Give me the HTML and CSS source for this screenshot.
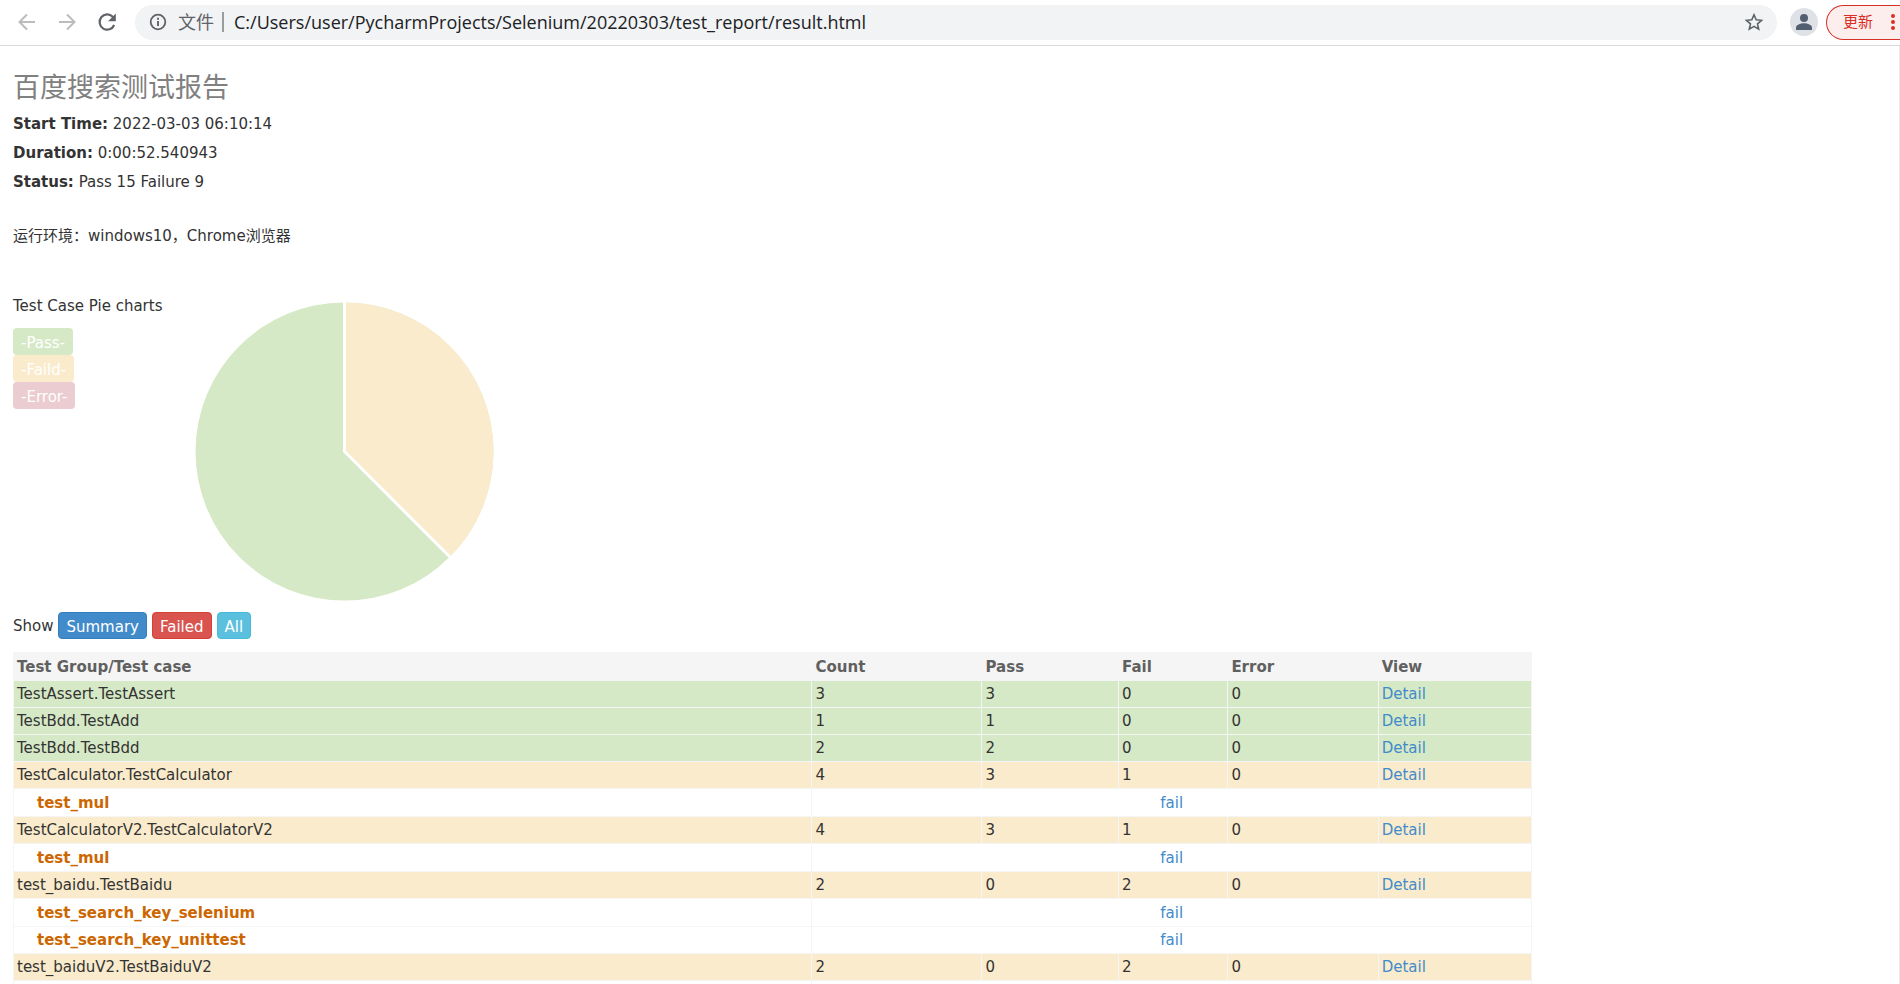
FILE: index.html
```html
<!DOCTYPE html>
<html lang="zh-CN">
<head>
<meta charset="utf-8">
<title>百度搜索测试报告</title>
<link rel="stylesheet" href="styles.css">
</head>
<body>
<header class="toolbar">
  <button class="icon-btn muted" type="button" aria-label="Back">
    <svg width="24" height="24" viewBox="0 0 24 24"><path d="M20 12H5M12 4.500L4.500 12l7.500 7.500" fill="none" stroke="currentColor" stroke-width="2"/></svg>
  </button>
  <button class="icon-btn muted" type="button" aria-label="Forward">
    <svg width="24" height="24" viewBox="0 0 24 24"><path d="M4 12h15M12 4.500l7.500 7.500-7.500 7.500" fill="none" stroke="currentColor" stroke-width="2"/></svg>
  </button>
  <button class="icon-btn" type="button" aria-label="Reload">
    <svg width="24" height="24" viewBox="0 0 24 24"><path d="M19.200 15a7.600 7.600 0 1 1-1.500-8.200l2 2" fill="none" stroke="currentColor" stroke-width="2.200"/><path d="M20.800 3.500v7.700h-7.700z" fill="currentColor"/></svg>
  </button>
  <div class="address">
    <svg class="info" width="18" height="18" viewBox="0 0 18 18"><circle cx="9" cy="9" r="7.300" fill="none" stroke="currentColor" stroke-width="1.800"/><path d="M9 8v5M9 4.800v1.900" stroke="currentColor" stroke-width="1.900"/></svg>
    <span class="scheme">文件</span>
    <span class="divider"></span>
    <span class="url">C:/Users/user/PycharmProjects/Selenium/20220303/test_report/result.html</span>
    <button class="star" type="button" aria-label="Bookmark">
      <svg width="18" height="18" viewBox="0 0 18 18"><path d="M9 1.800l2.200 5 5.400.5-4.100 3.600 1.200 5.300L9 13.400l-4.700 2.800 1.200-5.300L1.400 7.300l5.400-.5z" fill="none" stroke="currentColor" stroke-width="1.600"/></svg>
    </button>
  </div>
  <button class="avatar" type="button" aria-label="Profile">
    <svg width="28" height="28" viewBox="0 0 28 28"><circle cx="14" cy="10" r="4" fill="currentColor"/><path d="M6 22v-2.200C6 17 10.500 15.300 14 15.300s8 1.700 8 4.500V22z" fill="currentColor"/></svg>
  </button>
  <button class="update" type="button">更新
    <svg width="4" height="18" viewBox="0 0 4 18"><circle cx="2" cy="3" r="2" fill="currentColor"/><circle cx="2" cy="9" r="2" fill="currentColor"/><circle cx="2" cy="15" r="2" fill="currentColor"/></svg>
  </button>
</header>
<main class="report">
  <h1>百度搜索测试报告</h1>
  <p class="attribute"><strong>Start Time:</strong> 2022-03-03 06:10:14</p>
  <p class="attribute"><strong>Duration:</strong> 0:00:52.540943</p>
  <p class="attribute"><strong>Status:</strong> Pass 15 Failure 9</p>
  <p class="description">运行环境：windows10，Chrome浏览器</p>
  <section class="chart">
    <div class="legend">
      <p>Test Case Pie charts</p>
      <span class="badge pass">-Pass-</span>
      <span class="badge faild">-Faild-</span>
      <span class="badge error">-Error-</span>
    </div>
    <svg class="pie" width="300" height="300" viewBox="0 0 300 300" role="img" aria-label="Test case results">
      <circle cx="149.500" cy="149.500" r="149" fill="#d6e9c6"/>
      <path d="M149.500 149.500V.5A149 149 0 0 1 254.860 254.860z" fill="#faebcc"/>
      <path d="M149.500 0V149.500L257 257" fill="none" stroke="#fff" stroke-width="3"/>
    </svg>
  </section>
  <div class="filters">
    <span>Show</span>
    <button class="btn primary" type="button">Summary</button>
    <button class="btn danger" type="button">Failed</button>
    <button class="btn info-btn" type="button">All</button>
  </div>
  <table class="results">
    <colgroup><col class="c-name"><col class="c-count"><col class="c-pass"><col class="c-fail"><col class="c-error"><col class="c-view"></colgroup>
    <thead>
      <tr><th>Test Group/Test case</th><th>Count</th><th>Pass</th><th>Fail</th><th>Error</th><th>View</th></tr>
    </thead>
    <tbody>
      <tr class="ok"><td>TestAssert.TestAssert</td><td>3</td><td>3</td><td>0</td><td>0</td><td><a href="#">Detail</a></td></tr>
      <tr class="ok"><td>TestBdd.TestAdd</td><td>1</td><td>1</td><td>0</td><td>0</td><td><a href="#">Detail</a></td></tr>
      <tr class="ok"><td>TestBdd.TestBdd</td><td>2</td><td>2</td><td>0</td><td>0</td><td><a href="#">Detail</a></td></tr>
      <tr class="bad"><td>TestCalculator.TestCalculator</td><td>4</td><td>3</td><td>1</td><td>0</td><td><a href="#">Detail</a></td></tr>
      <tr class="case"><td>test_mul</td><td colspan="5"><a href="#">fail</a></td></tr>
      <tr class="bad"><td>TestCalculatorV2.TestCalculatorV2</td><td>4</td><td>3</td><td>1</td><td>0</td><td><a href="#">Detail</a></td></tr>
      <tr class="case"><td>test_mul</td><td colspan="5"><a href="#">fail</a></td></tr>
      <tr class="bad"><td>test_baidu.TestBaidu</td><td>2</td><td>0</td><td>2</td><td>0</td><td><a href="#">Detail</a></td></tr>
      <tr class="case"><td>test_search_key_selenium</td><td colspan="5"><a href="#">fail</a></td></tr>
      <tr class="case"><td>test_search_key_unittest</td><td colspan="5"><a href="#">fail</a></td></tr>
      <tr class="bad"><td>test_baiduV2.TestBaiduV2</td><td>2</td><td>0</td><td>2</td><td>0</td><td><a href="#">Detail</a></td></tr>
      <tr class="case"><td></td><td colspan="5"></td></tr>
    </tbody>
  </table>
</main>
</body>
</html>
```
FILE: styles.css
```css
* { box-sizing: border-box; }

body {
  margin: 0;
  height: 100vh;
  overflow: hidden;
  display: flex;
  flex-direction: column;
  background: #fff;
  color: #333;
  font: 15px/20px "DejaVu Sans", "Noto Sans CJK SC", sans-serif;
}

button { font: inherit; cursor: pointer; }
svg { display: block; }
a { color: #428bca; text-decoration: none; }

/* Browser toolbar */
.toolbar {
  flex: none;
  display: flex;
  align-items: center;
  height: 46px;
  padding: 0 0 1px 15px;
  border-bottom: 1px solid #d9dadc;
  overflow: hidden;
}
.icon-btn {
  flex: none;
  width: 24px;
  margin-right: 16px;
  padding: 0;
  border: 0;
  background: none;
  color: #5f6368;
}
.icon-btn.muted { color: #babcbe; }
.address {
  flex: 1;
  display: flex;
  align-items: center;
  height: 35px;
  padding: 0 14px;
  border-radius: 18px;
  background: #f1f3f4;
  font-family: "Open Sans", "Noto Sans CJK SC", sans-serif;
  font-size: 18px;
  color: #202124;
}
.info { color: #5f6368; }
.scheme { margin-left: 11px; color: #5f6368; }
.divider { width: 2px; height: 20px; margin: 0 10px 0 8px; background: #9a9da0; }
.url { flex: 1; white-space: nowrap; }
.star { padding: 0; border: 0; background: none; color: #5f6368; }
.avatar {
  flex: none;
  width: 28px;
  height: 28px;
  margin: 0 8px 0 13px;
  padding: 0;
  border: 0;
  border-radius: 50%;
  background: #dee1e6;
  color: #525f70;
}
.update {
  flex: none;
  display: flex;
  align-items: center;
  gap: 18px;
  height: 35px;
  padding: 0 5px 0 16px;
  border: 1px solid #d93025;
  border-right: 0;
  border-radius: 18px 0 0 18px;
  background: #fceeed;
  color: #d93025;
}

/* Report */
.report {
  flex: 1;
  min-height: 0;
  overflow: hidden;
  padding: 21px 0 0 13px;
  border-right: 1px solid #e8e8e8;
}
h1 {
  margin: 0 0 6px;
  font-size: 27px;
  line-height: 41px;
  font-weight: 400;
  color: #808080;
}
p { margin: 0; }
.attribute { margin-bottom: 9px; }
.description { margin: 34px 0 0; }
.chart { display: flex; margin-top: 50px; }
.legend {
  display: flex;
  flex-direction: column;
  align-items: flex-start;
  width: 182px;
}
.legend p { margin-bottom: 12px; }
.pie { margin-top: 6px; }
.badge {
  height: 27px;
  padding: 5px 8px 2px;
  border-radius: 4px;
  color: #fff;
}
.badge.pass { background: #d6e9c6; }
.badge.faild { background: #faebcc; }
.badge.error { background: #ebccd1; }
.filters { display: flex; align-items: center; gap: 5px; margin: 10px 0 13px; }
.btn {
  height: 27px;
  padding: 2px 7px 0;
  border: 1px solid;
  border-radius: 4px;
  color: #fff;
}
.primary { background: #428bca; border-color: #357ebd; }
.danger { background: #d9534f; border-color: #d43f3a; }
.info-btn { background: #5bc0de; border-color: #46b8da; }

.results {
  width: calc(80vw - 1px);
  table-layout: fixed;
  border-collapse: collapse;
}
.c-name { width: 52.600%; }
.c-count { width: 11.200%; }
.c-pass { width: 9%; }
.c-fail { width: 7.200%; }
.c-error { width: 9.900%; }
.c-view { width: 10.100%; }
.results th, .results td {
  height: 27px;
  padding: 2px 3px;
  border: 1px solid #f5f5f5;
  text-align: left;
}
.results th { height: 28px; background: #f5f5f5; color: #606060; }
.ok td { background: #d6e9c6; }
.bad td { background: #faebcc; }
.results .case td { height: 28px; text-align: center; }
.results .case + .case td { height: 27px; }
.results .case td:first-child {
  padding-left: 23px;
  text-align: left;
  font-weight: 700;
  color: #cc6600;
}
```
